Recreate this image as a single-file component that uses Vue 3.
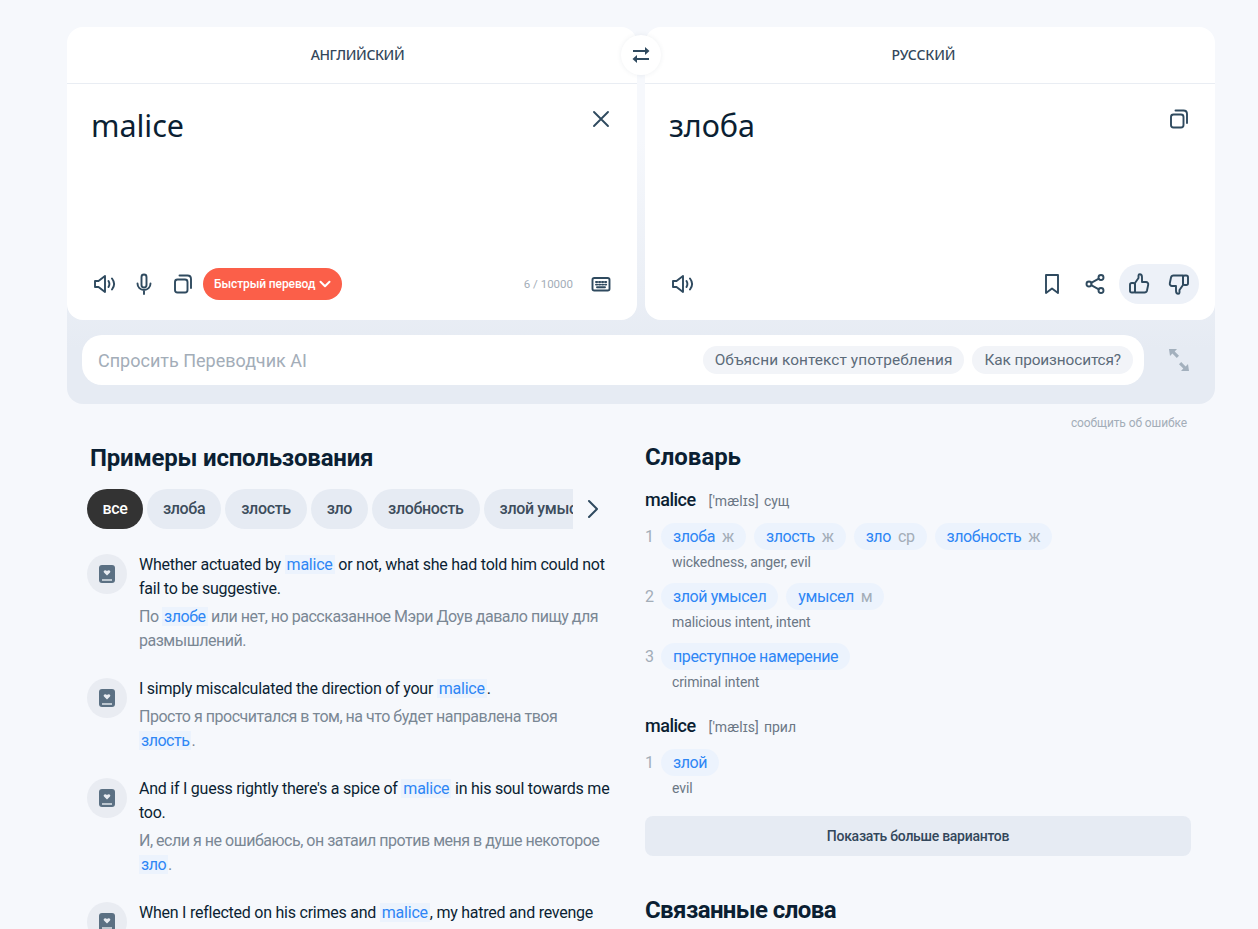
<script setup>
const tabs = ['злоба', 'злость', 'зло', 'злобность', 'злой умысел', 'умысел']
const examples = [
  { en: ['Whether actuated by ', 'malice', ' or not, what she had told him could not fail to be suggestive.'], ru: ['По ', 'злобе', ' или нет, но рассказанное Мэри Доув давало пищу для размышлений.'] },
  { en: ['I simply miscalculated the direction of your ', 'malice', '.'], ru: ['Просто я просчитался в том, на что будет направлена твоя ', 'злость', '.'] },
  { en: ["And if I guess rightly there's a spice of ", 'malice', ' in his soul towards me too.'], ru: ['И, если я не ошибаюсь, он затаил против меня в душе некоторое ', 'зло', '.'] },
  { en: ['When I reflected on his crimes and ', 'malice', ', my hatred and revenge burst all bounds of moderation.'], ru: ['Когда я размышлял о его преступлениях, ненависть переполняла меня.'] }
]
const dict = [
  { word: 'malice', pos: 'сущ', senses: [
    { items: [['злоба', 'ж'], ['злость', 'ж'], ['зло', 'ср'], ['злобность', 'ж']], syn: 'wickedness, anger, evil' },
    { items: [['злой умысел', ''], ['умысел', 'м']], syn: 'malicious intent, intent' },
    { items: [['преступное намерение', '']], syn: 'criminal intent' }
  ] },
  { word: 'malice', pos: 'прил', senses: [
    { items: [['злой', '']], syn: 'evil' }
  ] }
]
</script>

<template>
  <div class="page">
    <section class="translator">
      <div class="cards">
        <div class="card">
          <div class="card-head left">АНГЛИЙСКИЙ</div>
          <div class="card-body">
            <div class="big">malice</div>
            <svg class="ico" viewBox="0 0 24 24"><path d="M5 5l14 14M19 5L5 19" /></svg>
          </div>
          <div class="card-foot">
            <button class="ibtn"><svg class="ico" viewBox="0 0 24 24"><path d="M2 9v6h3.500L12 20V4L5.500 9H2z" /><path d="M15.500 9c1.200 2 1.200 4 0 6M19 6.500c2.700 3.500 2.700 7.500 0 11" /></svg></button>
            <button class="ibtn"><svg class="ico" viewBox="0 0 24 24"><rect x="9.500" y="2.500" width="5" height="13" rx="2.500" /><path d="M5.500 11.500c0 3.800 2.800 6.500 6.500 6.500s6.500-2.700 6.500-6.500M12 18v4" /></svg></button>
            <button class="ibtn"><svg class="ico" viewBox="0 0 24 24"><rect x="4" y="7.500" width="12.500" height="13" rx="2.500" /><path d="M8.500 3.500h8c2 0 3.500 1.500 3.500 3.500v9" /></svg></button>
            <button class="quick">Быстрый перевод<svg viewBox="0 0 12 12"><path d="M1.500 3.800L6 8.300l4.500-4.500" /></svg></button>
            <span class="count">6 / 10000</span>
            <button class="ibtn kbd"><svg class="ico" viewBox="0 0 24 24"><rect x="3.500" y="6" width="17" height="12.500" rx="1.800" /><path class="dots" d="M7 10h1.200M10 10h1.200M13 10h1.200M16 10h1.200M7 12.600h1.200M10 12.600h1.200M13 12.600h1.200M16 12.600h1.200M8 15.200h8" /></svg></button>
          </div>
        </div>
        <div class="card">
          <div class="card-head right">РУССКИЙ</div>
          <div class="card-body">
            <div class="big">злоба</div>
            <svg class="ico" viewBox="0 0 24 24"><rect x="4" y="7.500" width="12.500" height="13" rx="2.500" /><path d="M8.500 3.500h8c2 0 3.500 1.500 3.500 3.500v9" /></svg>
          </div>
          <div class="card-foot">
            <button class="ibtn"><svg class="ico" viewBox="0 0 24 24"><path d="M2 9v6h3.500L12 20V4L5.500 9H2z" /><path d="M15.500 9c1.200 2 1.200 4 0 6M19 6.500c2.700 3.500 2.700 7.500 0 11" /></svg></button>
            <span class="spacer"></span>
            <button class="ibtn mark-btn"><svg class="ico" viewBox="0 0 24 24"><path d="M6 3h12v18l-6-4.500L6 21V3z" /></svg></button>
            <button class="ibtn share-btn"><svg class="ico" viewBox="0 0 24 24"><circle cx="18" cy="5.500" r="2.500" /><circle cx="6" cy="12" r="2.500" /><circle cx="18" cy="18.500" r="2.500" /><path d="M8.200 10.800l7.600-4.100M8.200 13.200l7.600 4.100" /></svg></button>
            <div class="rate">
              <button class="ibtn"><svg class="ico" viewBox="0 0 24 24"><path d="M8 11l3.500-5V3.500c0-.8.600-1.300 1.300-1.300 1.500 0 2.200 1.500 2.200 3V10h4c1.500 0 2.500 1.300 2.200 2.700l-1.200 5.800c-.3 1.300-1.300 2-2.500 2H8V11z" /><rect x="3" y="11" width="5" height="9.500" rx="1.800" /></svg></button>
              <button class="ibtn"><svg class="ico" viewBox="0 0 24 24"><path d="M16 13l-3.500 5v2.500c0 .8-.6 1.300-1.300 1.300-1.500 0-2.200-1.500-2.200-3V14H5c-1.500 0-2.500-1.300-2.200-2.700L4 5.500C4.300 4.200 5.300 3.500 6.500 3.500H16V13z" /><rect x="16" y="3.500" width="5" height="9.500" rx="1.800" /></svg></button>
            </div>
          </div>
        </div>
        <button class="swap"><svg class="swap-ico" viewBox="0 0 24 24"><path d="M4 8h13M20 16H7" /><path class="head" d="M16 4L20.500 8 16 12zM8 12L3.500 16 8 20z" /></svg></button>
      </div>
      <div class="ai">
        <div class="ai-input">
          <span class="ai-ph">Спросить Переводчик AI</span>
          <span class="ai-pill wide">Объясни контекст употребления</span>
          <span class="ai-pill tight">Как произносится?</span>
        </div>
        <svg class="expand" viewBox="0 0 24 24"><path d="M2 1h8L7.700 3.400 12 7.800 9.800 10 5.400 5.600 3 8zM22 23h-8l2.300-2.400-4.300-4.400 2.200-2.200 4.400 4.400L21 16z" /></svg>
      </div>
    </section>
    <div class="report">сообщить об ошибке</div>
    <div class="columns">
      <section class="col-left">
        <h2>Примеры использования</h2>
        <div class="tabs-row">
          <div class="tabs">
            <span class="tab active">все</span>
            <span v-for="t in tabs" :key="t" class="tab">{{ t }}</span>
          </div>
          <svg class="next" viewBox="0 0 24 24"><path d="M8 4l8 8-8 8" /></svg>
        </div>
        <div class="examples">
          <article v-for="(e, i) in examples" :key="i" class="example">
            <div class="ex-ico"><svg viewBox="0 0 16 18"><rect width="16" height="18" rx="3" fill="#5b7083" /><path d="M3 15h10" stroke="#e9ecf2" stroke-width="1.400" /><path d="M8 10.500L5 7.500c-1.300-1.600 1.200-3.500 3-1.500 1.800-2 4.300-.1 3 1.500L8 10.500z" fill="#e9ecf2" /></svg></div>
            <div class="ex-text">
              <p class="en">{{ e.en[0] }}<mark>{{ e.en[1] }}</mark>{{ e.en[2] }}</p>
              <p class="ru">{{ e.ru[0] }}<mark v-if="e.ru[1]">{{ e.ru[1] }}</mark>{{ e.ru[2] }}</p>
            </div>
          </article>
        </div>
      </section>
      <section class="col-right">
        <h2 class="dict-title">Словарь</h2>
        <div v-for="(d, i) in dict" :key="i" class="entry">
          <div class="entry-head"><b>{{ d.word }}</b><span class="tr">['mælɪs]</span><span class="pos">{{ d.pos }}</span></div>
          <div v-for="(s, j) in d.senses" :key="j" class="sense">
            <span class="num">{{ j + 1 }}</span>
            <div>
              <div class="chips">
                <span v-for="it in s.items" :key="it[0]" class="chip">{{ it[0] }}<i v-if="it[1]">{{ it[1] }}</i></span>
              </div>
              <div class="syn">{{ s.syn }}</div>
            </div>
          </div>
        </div>
        <button class="more">Показать больше вариантов</button>
        <h2 class="related">Связанные слова</h2>
      </section>
    </div>
  </div>
</template>

<style>
html, body { margin: 0; background: #f6f8fc; overflow: hidden; }
</style>

<style scoped>
.page {
  width: 1148px;
  height: 902px;
  padding: 27px 0 0 67px;
  overflow: hidden;
  font-family: Roboto, sans-serif;
  color: #0b1f33;
}
button { font-family: inherit; border: 0; padding: 0; background: none; }
.ico { width: 24px; height: 24px; fill: none; stroke: #2f4a5f; stroke-width: 1.9; stroke-linecap: round; stroke-linejoin: round; display: block; }
.translator {
  border-radius: 16px;
  background: linear-gradient(#f6f8fc 30%, #e6ebf3 85%);
  padding-bottom: 19px;
}
.cards { position: relative; display: flex; gap: 8px; }
.card { width: 570px; height: 293px; background: #fff; border-radius: 16px; display: flex; flex-direction: column; }
.card-head { height: 56px; line-height: 56px; border-bottom: 1px solid #e9edf3; text-align: center; font-family: "Noto Sans", sans-serif; font-size: 14px; font-weight: 500; letter-spacing: -.4px; color: #33475b; }
.card-head.left { padding-left: 11px; }
.card-head.right { padding-right: 13px; letter-spacing: -.1px; }
.card-body { flex: 1; display: flex; justify-content: space-between; padding: 23px 24px 0; }
.big { font-family: "Noto Sans", sans-serif; font-size: 30.500px; letter-spacing: -.05px; line-height: 40px; color: #0b1f33; margin-top: -2px; }
.card-foot { height: 48px; padding: 0 16px 12px 18px; display: flex; align-items: center; }
.ibtn { width: 39px; height: 40px; display: flex; align-items: center; justify-content: center; flex: none; }
.quick { height: 32px; border-radius: 16px; background: #fb5f49; color: #fff; font-size: 12px; font-weight: 500; letter-spacing: -.1px; padding: 0 11px; display: flex; align-items: center; gap: 4px; margin-left: 1px; }
.quick svg { width: 12px; height: 12px; fill: none; stroke: #fff; stroke-width: 2; stroke-linecap: round; stroke-linejoin: round; }
.count { margin-left: auto; font-size: 11.500px; color: #a3adb8; }
.kbd { margin-left: 9px; width: 38px; margin-right: 1px; }
.spacer { flex: 1; }
.mark-btn { width: 43px; }
.share-btn { width: 43px; margin-right: 3px; }
.rate { width: 80px; height: 40px; border-radius: 20px; background: #edf1f8; display: flex; }
.rate .ibtn { width: 40px; }
.swap { position: absolute; left: 554px; top: 8px; width: 40px; height: 40px; border-radius: 50%; background: #fff; display: flex; align-items: center; justify-content: center; box-shadow: 0 0 5px rgba(40, 60, 90, .08); }
.swap-ico { width: 24px; height: 24px; fill: none; stroke: #2f4a5f; stroke-width: 2.200; }
.swap-ico .head { fill: #2f4a5f; stroke: none; }
.ai { display: flex; align-items: center; padding: 15px 0 0 15px; }
.ai-input { width: 1062px; height: 50px; box-sizing: border-box; background: #fff; border-radius: 20px; display: flex; align-items: center; padding: 0 11px 0 16px; gap: 8px; }
.ai-ph { font-size: 18px; color: #a3adb8; margin-right: auto; }
.ai-pill { height: 28px; line-height: 28px; border-radius: 14px; padding: 0 12px; background: #f2f4f8; font-size: 15.400px; color: #5c6b7a; }
.ai-pill.wide { letter-spacing: .07px; }
.ai-pill.tight { letter-spacing: -.12px; }
.expand { width: 24px; height: 24px; margin-left: 23px; fill: #a3b0bd; }
.report { width: 1120px; text-align: right; font-size: 12px; letter-spacing: -.1px; line-height: 14px; color: #a3adb8; margin-top: 12px; }
.columns { display: flex; margin-top: 12px; }
h2 { margin: 0; font-size: 24px; line-height: 32px; font-weight: 700; color: #0b1f33; letter-spacing: -.2px; }
.col-left { width: 578px; box-sizing: border-box; padding-left: 23px; }
.tabs-row { display: flex; align-items: center; margin: 15px 0 0 -3px; }
.tabs { width: 486px; height: 40px; overflow: hidden; display: flex; gap: 4px; white-space: nowrap; }
.tab { flex: none; height: 40px; line-height: 40px; padding: 0 16px; border-radius: 20px; background: #e6ebf3; font-size: 16px; font-weight: 500; letter-spacing: -.35px; color: #3d4d5c; }
.tab.active { background: #333; color: #fff; padding: 0 15.500px; }
.next { width: 24px; height: 24px; margin-left: 8px; fill: none; stroke: #2f4a5f; stroke-width: 2; stroke-linecap: round; stroke-linejoin: round; }
.examples { margin-top: 24px; margin-left: -3px; }
.example { display: flex; gap: 12px; margin-bottom: 24px; }
.ex-ico { width: 40px; height: 40px; margin-top: 1px; border-radius: 50%; background: #e9ecf2; display: flex; align-items: center; justify-content: center; flex: none; }
.ex-ico svg { width: 16px; height: 18px; }
.ex-text { width: 472px; }
p { margin: 0; font-size: 16px; line-height: 24px; }
.en { color: #0b1f33; letter-spacing: -.24px; }
.ru { margin-top: 4px; color: #7a8794; letter-spacing: -.48px; }
mark { background: #ecf3fd; color: #2e86f5; padding: 0 2px; }
.col-right { width: 546px; margin-top: -1px; }
.dict-title { letter-spacing: 0; margin-bottom: 15px; }
.entry-head { display: flex; align-items: baseline; height: 24px; font-size: 14px; color: #6b7785; line-height: 24px; }
.entry-head b { font-size: 18px; font-weight: 500; letter-spacing: -.5px; color: #0b1f33; margin-right: 13px; }
.pos { margin-left: 5px; }
.tr { letter-spacing: .1px; }
.sense { display: flex; margin-top: 11px; }
.num { width: 16px; font-size: 16px; line-height: 27px; color: #a3adb8; }
.chips { display: flex; gap: 8px; }
.chip { height: 27px; line-height: 27px; padding: 0 12px; border-radius: 14px; background: #ecf3fd; font-size: 16px; letter-spacing: -.4px; color: #2e86f5; }
.chip i { font-style: normal; color: #a3adb8; margin-left: 7px; }
.syn { font-size: 14px; letter-spacing: -.1px; line-height: 20px; margin: 2px 0 0 11px; color: #6b7785; }
.entry + .entry { margin-top: 22px; }
.more { display: block; width: 546px; height: 40px; margin-top: 18px; border-radius: 8px; background: #e6ebf3; font-size: 14px; font-weight: 500; letter-spacing: -.28px; color: #33475b; }
.related { margin-top: 38px; letter-spacing: -.6px; }
</style>
